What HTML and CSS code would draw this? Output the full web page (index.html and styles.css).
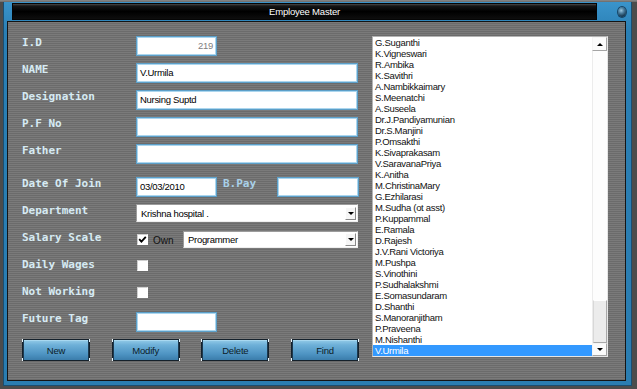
FILE: index.html
```html
<!DOCTYPE html>
<html lang="en">
<head>
<meta charset="utf-8">
<title>Employee Master</title>
<link rel="stylesheet" href="styles.css">
</head>
<body>
<div class="window">
  <div class="frame">
    <div class="titlebar">
      <div class="title">Employee Master</div>
      <div class="title-ctl"><span class="knob"></span></div>
    </div>
    <div class="content">
      <div class="form">
        <div class="row"><span class="lbl">I.D</span><span class="field short id">219</span></div>
        <div class="row"><span class="lbl">NAME</span><span class="field wide">V.Urmila</span></div>
        <div class="row"><span class="lbl">Designation</span><span class="field wide">Nursing Suptd</span></div>
        <div class="row"><span class="lbl">P.F No</span><span class="field wide"></span></div>
        <div class="row"><span class="lbl">Father</span><span class="field wide"></span></div>
        <div class="row row-gap"><span class="lbl">Date Of Join</span><span class="field short">03/03/2010</span><span class="lbl2">B.Pay</span><span class="field bpay"></span></div>
        <div class="row"><span class="lbl">Department</span><span class="select dept"><span class="sel-text">Krishna hospital .</span><span class="drop"></span></span></div>
        <div class="row"><span class="lbl">Salary Scale</span><span class="check salary"><svg width="9" height="9" viewBox="0 0 9 9"><path d="M1.2 4.2 L3.4 6.6 L7.8 1.8" fill="none" stroke="#000" stroke-width="1.8"/></svg></span><span class="own">Own</span><span class="select prog"><span class="sel-text">Programmer</span><span class="drop"></span></span></div>
        <div class="row"><span class="lbl">Daily Wages</span><span class="check"></span></div>
        <div class="row"><span class="lbl">Not Working</span><span class="check"></span></div>
        <div class="row"><span class="lbl">Future Tag</span><span class="field short"></span></div>
        <div class="buttons">
          <span class="btn">New</span>
          <span class="btn">Modify</span>
          <span class="btn">Delete</span>
          <span class="btn">Find</span>
        </div>
      </div>
      <div class="listbox">
        <ul class="items">
          <li>G.Suganthi</li>
          <li>K.Vigneswari</li>
          <li>R.Ambika</li>
          <li>K.Savithri</li>
          <li>A.Nambikkaimary</li>
          <li>S.Meenatchi</li>
          <li>A.Suseela</li>
          <li>Dr.J.Pandiyamunian</li>
          <li>Dr.S.Manjini</li>
          <li>P.Omsakthi</li>
          <li>K.Sivaprakasam</li>
          <li>V.SaravanaPriya</li>
          <li>K.Anitha</li>
          <li>M.ChristinaMary</li>
          <li>G.Ezhilarasi</li>
          <li>M.Sudha (ot asst)</li>
          <li>P.Kuppammal</li>
          <li>E.Ramala</li>
          <li>D.Rajesh</li>
          <li>J.V.Rani Victoriya</li>
          <li>M.Pushpa</li>
          <li>S.Vinothini</li>
          <li>P.Sudhalakshmi</li>
          <li>E.Somasundaram</li>
          <li>D.Shanthi</li>
          <li>S.Manoranjitham</li>
          <li>P.Praveena</li>
          <li>M.Nishanthi</li>
          <li class="sel">V.Urmila</li>
        </ul>
        <div class="scrollbar">
          <div class="sb-btn up"><span class="tri-up"></span></div>
          <div class="sb-track"><div class="sb-thumb"></div></div>
          <div class="sb-btn down"><span class="tri-down"></span></div>
        </div>
      </div>
    </div>
  </div>
</div>
</body>
</html>
```
FILE: styles.css
```css
* { box-sizing: border-box; margin: 0; padding: 0; }
html, body { width: 637px; height: 389px; overflow: hidden; }
body { background: #3c3c3c; font-family: "Liberation Sans", Arial, sans-serif; }

.window {
  width: 637px; height: 389px;
  padding: 2px 5px 3px 3px;
  background: linear-gradient(to bottom, #8a8a8a 0, #6a6a6a 2px, #4c4c4c 2px, #4c4c4c 100%);
}
.frame {
  height: 100%;
  display: flex; flex-direction: column;
  padding: 1px 6px 5px 4px;
  background: linear-gradient(to bottom, #3a94cb 0, #2a7fb4 30px, #2a7db1 100%);
  box-shadow: inset 1px 0 0 #1b4e70, inset -1px 0 0 #1b4e70, inset 0 -1px 0 #1b4e70;
}
.titlebar { height: 17px; flex: none; display: flex; }
.title {
  flex: 1; margin-left: 5px;
  background: linear-gradient(to bottom, #4a4a4a 0, #151515 2px, #000 50%, #0e0e0e 100%);
  border: 1px solid #050505;
  color: #fff; font-size: 9.5px; line-height: 15px; text-align: center;
  letter-spacing: -0.2px;
}
.title-ctl { width: 29px; flex: none; display: flex; align-items: center; padding-left: 21px; }
.knob {
  width: 10px; height: 10px; border-radius: 50%;
  background: radial-gradient(circle at 40% 35%, #9cc6de 0, #4a7c9c 35%, #1a3a52 70%, #0a1a26 100%);
  box-shadow: 0 0 0 1px #174464;
}

.content {
  flex: 1; margin-top: 1px;
  border: 1px solid #141414;
  background: repeating-linear-gradient(to bottom, #7a7a7a 0, #7a7a7a 1px, #6b6b6b 1px, #6b6b6b 2px);
  display: flex; align-items: flex-start; gap: 13px;
  padding: 14px 17px 0 14px;
}

.form { width: 337px; flex: none; display: flex; flex-direction: column; }
.row { display: flex; align-items: flex-start; height: 20px; margin-bottom: 7px; }
.row-gap { margin-top: 6px; }
.lbl {
  width: 114px; flex: none;
  font: bold 11px/14px "DejaVu Sans Mono", monospace;
  color: #d6eaf3;
}
.lbl2 {
  width: 60px; flex: none; padding-left: 6px;
  font: bold 11px/14px "DejaVu Sans Mono", monospace;
  color: #a9d0e8;
}
.field {
  height: 20px; flex: none;
  background: #fff;
  border: 1px solid #5c9fc8;
  box-shadow: inset 0 0 0 1px #acd6ee;
  font-size: 9.5px; line-height: 18px; letter-spacing: -0.3px;
  padding: 0 3px; color: #000; white-space: nowrap;
}
.short { width: 81px; }
.wide { width: 222px; }
.bpay { width: 82px; }
.id { text-align: right; color: #808080; }

.select {
  height: 18px; flex: none;
  background: #fff;
  border: 1px solid; border-color: #9c9c9c #eeeeee #eeeeee #9c9c9c;
  display: flex; align-items: center; justify-content: space-between;
  padding-left: 4px;
  font-size: 9.5px; letter-spacing: -0.3px; color: #000;
}
.dept { width: 222px; }
.prog { width: 175px; height: 17px; }
.drop {
  width: 11px; height: 13px; margin-right: 1px;
  background: #f6f6f6;
  border: 1px solid; border-color: #ffffff #8a8a8a #8a8a8a #ffffff;
  display: flex; align-items: center; justify-content: center;
}
.drop::after {
  content: ""; width: 0; height: 0;
  border-left: 3px solid transparent; border-right: 3px solid transparent;
  border-top: 3px solid #000;
}

.check {
  width: 11px; height: 11px; flex: none;
  margin: 2px 0 0 1px;
  background: #fff;
  border: 1px solid; border-color: #cfcfcf #ffffff #ffffff #cfcfcf;
  display: flex; align-items: center; justify-content: center;
}
.check.salary { margin-top: 3px; }
.own {
  width: 35px; flex: none; padding: 1px 0 0 5px;
  font-size: 10px; line-height: 17px; color: #111;
}

.buttons { display: flex; justify-content: space-between; margin-top: 0; }
.btn {
  position: relative;
  width: 68px; height: 22px;
  display: flex; align-items: center; justify-content: center;
  border: 1px solid #15212b;
  background: linear-gradient(to bottom, #93cbe8 0, #6eb0d8 25%, #4e94c3 70%, #3b7dab 100%);
  box-shadow: inset 1px 0 0 #1d3a50, inset -1px 0 0 #1d3a50, inset 0 1px 0 #a8d8f0;
  font-size: 9.5px; color: #0c1c28; letter-spacing: -0.2px;
}
.btn::before {
  content: ""; position: absolute; inset: -1px;
  background:
    linear-gradient(#e8f4fa, #e8f4fa) left top / 1px 3px no-repeat,
    linear-gradient(#e8f4fa, #e8f4fa) right top / 1px 3px no-repeat,
    linear-gradient(#e8f4fa, #e8f4fa) left bottom / 1px 3px no-repeat,
    linear-gradient(#e8f4fa, #e8f4fa) right bottom / 1px 3px no-repeat;
}

.listbox {
  width: 236px; height: 321px; flex: none;
  display: flex;
  background: #fff;
  border: 1px solid; border-color: #b4b4b4 #e6e6e6 #e6e6e6 #b4b4b4;
}
.items {
  flex: 1; list-style: none;
  font-size: 9.5px; line-height: 11px; letter-spacing: -0.3px; color: #111;
}
.items li { height: 11px; padding-left: 2px; white-space: nowrap; }
.items li.sel { background: #3399ff; color: #fff; }

.scrollbar { width: 15px; flex: none; display: flex; flex-direction: column; background: #fbfbfb; }
.sb-btn {
  height: 14px; flex: none;
  background: #fbfbfb;
  border: 1px solid; border-color: #f4f4f4 #a4a4a4 #a4a4a4 #f4f4f4;
  display: flex; align-items: center; justify-content: center;
}
.sb-btn.down { height: 13px; }
.tri-up { width: 0; height: 0; border-left: 3px solid transparent; border-right: 3px solid transparent; border-bottom: 3px solid #000; }
.tri-down { width: 0; height: 0; border-left: 3px solid transparent; border-right: 3px solid transparent; border-top: 3px solid #000; }
.sb-track {
  flex: 1; display: flex; flex-direction: column; justify-content: flex-end;
  background: #fdfdfd; border-left: 1px solid #ececec;
}
.sb-thumb {
  height: 43px;
  background: #ececec;
  border: 1px solid; border-color: #ffffff #a8a8a8 #a8a8a8 #d8d8d8;
}
```
